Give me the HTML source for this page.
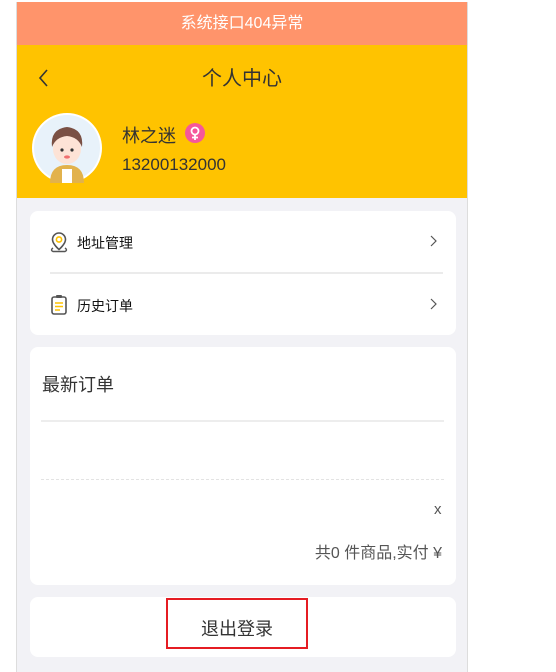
<!DOCTYPE html>
<html><head><meta charset="utf-8"><style>
*{margin:0;padding:0;box-sizing:border-box}
body{width:556px;height:662px;background:#fff;font-family:"Liberation Sans","Noto Sans CJK SC",sans-serif;position:relative;overflow:hidden}
.wrap{position:absolute;left:16px;top:2px;width:452px;height:670px;background:#f2f2f6;border-left:1px solid #ddd;border-right:1px solid #ddd}
.banner{position:absolute;left:0;top:0;width:450px;height:43px;background:#ff946b;color:#fff;font-size:16px;text-align:center;line-height:43px}
.head{position:absolute;left:0;top:43px;width:450px;height:153px;background:#ffc300}
.card{position:absolute;left:13px;width:426px;background:#fff;border-radius:8px}
.abs{position:absolute}
</style></head><body>
<div class="wrap">
<div class="banner">系统接口404异常</div>
<div class="head">
<svg class="abs" style="left:20px;top:23px" width="12" height="20"><path d="M10 2 L3 10 L10 18" stroke="#333" stroke-width="1.6" fill="none"/></svg>
<div class="abs" style="left:0;width:450px;top:17px;text-align:center;font-size:20px;color:#333">个人中心</div>
<svg class="abs" style="left:15px;top:68px" width="70" height="70" viewBox="0 0 70 70">
<circle cx="35" cy="35" r="35" fill="#fff"/><circle cx="35" cy="35" r="33" fill="#e8f2fa"/>
<path d="M18 70 Q18 52 35 52 Q52 52 52 70Z" fill="#e2b24c"/><rect x="30" y="56" width="10" height="14" fill="#fff"/>
<ellipse cx="35" cy="36" rx="14" ry="15" fill="#fde3d6"/>
<path d="M20 34 Q18 16 35 14 Q52 16 50 34 Q46 24 35 23 Q24 24 20 34Z" fill="#7a5044"/>
<circle cx="30" cy="37" r="1.6" fill="#333"/><circle cx="40" cy="37" r="1.6" fill="#333"/>
<ellipse cx="35" cy="44" rx="3" ry="1.6" fill="#f07070"/></svg>
<div class="abs" style="left:105px;top:77px;font-size:18px;color:#333">林之迷</div>
<svg class="abs" style="left:168px;top:78px" width="20" height="20"><circle cx="10" cy="10" r="10" fill="#f5579b"/><circle cx="10" cy="8" r="3.5" stroke="#fff" stroke-width="1.8" fill="none"/><path d="M10 11.5V17M7 14.5H13" stroke="#fff" stroke-width="1.8"/></svg>
<div class="abs" style="left:105px;top:110px;font-size:17px;color:#333">13200132000</div>
</div>
<div class="card" style="top:209px;height:124px">
<svg class="abs" style="left:19px;top:20px" width="20" height="22"><path d="M10 2a6.5 6.5 0 0 0-6.5 6.5c0 4.5 6.5 10 6.5 10s6.5-5.5 6.5-10A6.5 6.5 0 0 0 10 2z" stroke="#555" stroke-width="1.6" fill="none"/><circle cx="10" cy="8.5" r="2.6" stroke="#ffc300" stroke-width="1.6" fill="none"/><path d="M4 17Q1 19 4 20.5H16Q19 19 16 17" stroke="#555" stroke-width="1.4" fill="none"/></svg>
<div class="abs" style="left:47px;top:22px;font-size:14px;color:#111">地址管理</div>
<svg class="abs" style="left:400px;top:24px" width="8" height="12"><path d="M1 1L6 6L1 11" stroke="#555" stroke-width="1.2" fill="none"/></svg>
<div class="abs" style="left:20px;top:61px;width:393px;height:2px;background:#ebebeb"></div>
<svg class="abs" style="left:20px;top:83px" width="18" height="22"><rect x="2" y="3" width="14" height="17" rx="2" stroke="#555" stroke-width="1.6" fill="none"/><rect x="6" y="1" width="6" height="3" rx="1" fill="#555"/><path d="M5 9H13M5 12.5H13M5 16H10" stroke="#ffc300" stroke-width="1.6"/></svg>
<div class="abs" style="left:47px;top:85px;font-size:14px;color:#111">历史订单</div>
<svg class="abs" style="left:400px;top:87px" width="8" height="12"><path d="M1 1L6 6L1 11" stroke="#555" stroke-width="1.2" fill="none"/></svg>
</div>
<div class="card" style="top:345px;height:238px">
<div class="abs" style="left:12px;top:24px;font-size:18px;color:#333">最新订单</div>
<div class="abs" style="left:11px;top:73px;width:403px;height:2px;background:#ededed"></div>
<div class="abs" style="left:11px;top:132px;width:403px;border-top:1px dashed #e3e3e3"></div>
<div class="abs" style="left:404px;top:154px;font-size:15px;color:#555">x</div>
<div class="abs" style="right:14px;top:192px;font-size:16px;color:#555">共0 件商品,实付 ¥</div>
</div>
<div class="card" style="top:595px;height:60px">
<div class="abs" style="left:136px;top:1px;width:142px;height:51px;border:2px solid #e51c23;text-align:center;padding-top:17px;line-height:24px;font-size:18px;color:#333">退出登录</div>
</div>
</div>
</body></html>
